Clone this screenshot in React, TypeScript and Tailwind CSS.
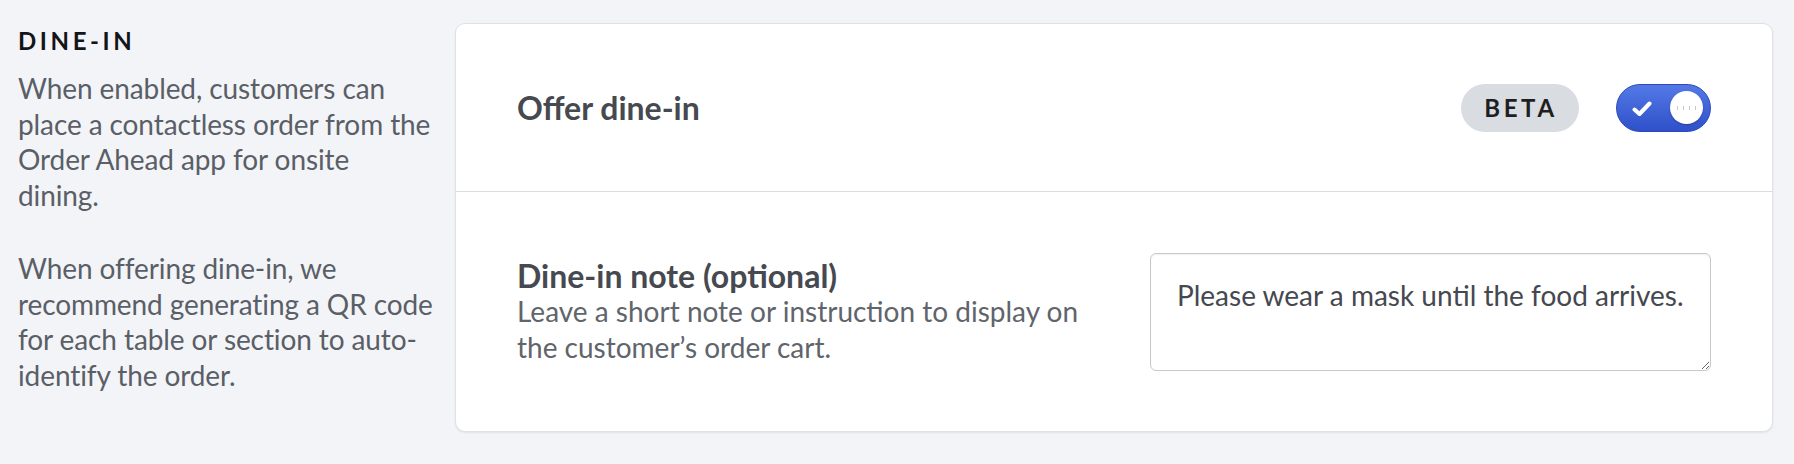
import React from "react";

export default function App() {
  return (
    <div
      className="w-full h-[464px] bg-[#f3f4f8] flex items-start"
      style={{ fontFamily: "Lato, 'Open Sans', sans-serif" }}
    >
      <div className="w-[455px] shrink-0 pl-[18px] pr-[22px] pt-[26px]">
        <div className="text-[24px] leading-[30px] font-bold tracking-[0.15em] text-[#141518]">
          DINE-IN
        </div>
        <p className="mt-[15px] text-[28px] leading-[35.5px] tracking-[-0.1px] text-[#5a5f67]">
          When enabled, customers can place a contactless order from the Order Ahead app for onsite dining.
        </p>
        <p className="mt-[38px] text-[28px] leading-[35.5px] tracking-[-0.1px] text-[#5a5f67]">
          When offering dine-in, we recommend generating a QR code for each table or section to auto-identify the order.
        </p>
      </div>

      <div className="mt-[23px] mr-[21px] flex-1 bg-white border border-[#dfe1e5] rounded-[10px] shadow-[0_1px_2px_rgba(0,0,0,0.08)]">
        <div className="h-[168px] border-b border-[#d9dce0] px-[61px] flex items-center justify-between">
          <div className="text-[32px] leading-[36px] font-bold text-[#46494f]">Offer dine-in</div>
          <div className="flex items-center gap-[37px]">
            <div className="w-[118px] h-[48px] rounded-full bg-[#d9dce0] flex items-center justify-center text-[24px] font-bold tracking-[0.15em] text-[#1d1f22] pl-[2px]">
              BETA
            </div>
            <div className="relative w-[95px] h-[48px] rounded-full border border-[#2b49bd] bg-gradient-to-b from-[#5479e6] to-[#2f50c9]">
              <svg
                className="absolute left-[15px] top-[16px]"
                width="20"
                height="16"
                viewBox="0 0 20 16"
                fill="none"
              >
                <path
                  d="M2.5 8.5 L7.5 13 L17.5 2.5"
                  stroke="white"
                  strokeWidth="4"
                  strokeLinecap="round"
                  strokeLinejoin="round"
                />
              </svg>
              <div className="absolute right-[7px] top-[6.5px] w-[33px] h-[33px] rounded-full bg-white shadow-[0_1px_2px_rgba(0,0,0,0.25)] flex items-center justify-center gap-[4.5px]">
                <span className="w-[1.5px] h-[4px] bg-[#c4c8cc]" />
                <span className="w-[1.5px] h-[4px] bg-[#c4c8cc]" />
                <span className="w-[1.5px] h-[4px] bg-[#c4c8cc]" />
                <span className="w-[1.5px] h-[4px] bg-[#c4c8cc]" />
              </div>
            </div>
          </div>
        </div>
        <div className="h-[239px] px-[61px] flex items-center justify-between">
          <div className="w-[575px]">
            <div className="text-[32px] leading-[36px] font-bold text-[#46494f]">Dine-in note (optional)</div>
            <div className="text-[28px] leading-[35.5px] text-[#60646b]">
              Leave a short note or instruction to display on the customer’s order cart.
            </div>
          </div>
          <textarea
            className="w-[561px] h-[118px] border border-[#c5c9ce] rounded-[6px] pl-[26px] pr-[20px] pt-[23px] text-[28px] leading-[36px] text-[#45484f] shadow-[inset_0_1px_2px_rgba(0,0,0,0.06)] outline-none resize"
            style={{ fontFamily: "Lato, 'Open Sans', sans-serif" }}
            defaultValue="Please wear a mask until the food arrives."
          />
        </div>
      </div>
    </div>
  );
}
